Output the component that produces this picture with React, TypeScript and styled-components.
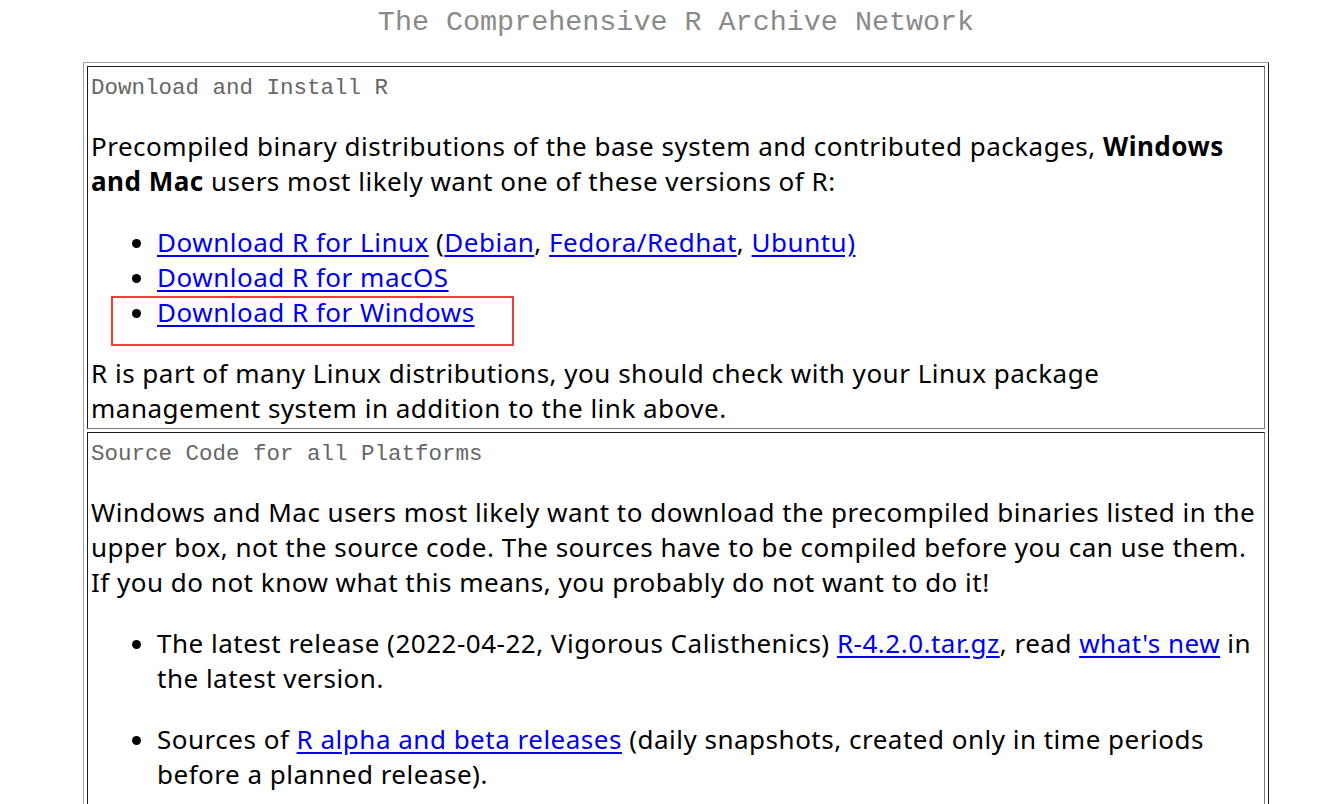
import React from 'react'
import styled, { createGlobalStyle } from 'styled-components'

const GlobalStyle = createGlobalStyle`
  html, body {
    margin: 0;
    padding: 0;
    background: #fff;
  }
  body {
    font-family: 'Noto Sans', 'Open Sans', sans-serif;
    color: #000;
  }
`

const Page = styled.div`
  width: 1186px;
  margin-left: 83px;
`

const Title = styled.h1`
  margin: 0 0 18px;
  padding-top: 2px;
  height: 42px;
  line-height: 42px;
  text-align: center;
  font-family: 'Liberation Mono', monospace;
  font-weight: normal;
  font-size: 28.4px;
  color: #8a8a8a;
`

const Frame = styled.div`
  border: 1px solid;
  border-color: #a0a0a0 #1e1e1e #1e1e1e #a0a0a0;
  padding: 3px;
  display: flex;
  flex-direction: column;
  gap: 3px;
`

const Cell = styled.section`
  position: relative;
  border: 1px solid;
  border-color: #1e1e1e #7a7a7a #7a7a7a #1e1e1e;
  padding: 6px 3px 2px;
`

const Heading = styled.h2`
  margin: 0;
  height: 30px;
  line-height: 30px;
  font-family: 'Liberation Mono', monospace;
  font-weight: normal;
  font-size: 22.5px;
  color: #666;
`

const Para = styled.p`
  margin: 26px 0;
  font-size: 26px;
  letter-spacing: 0.5px;
  line-height: 35px;
  &:last-child {
    margin-bottom: 0;
  }
`

const List = styled.ul`
  margin: 26px 0;
  padding-left: 66px;
  font-size: 26px;
  letter-spacing: 0.5px;
  line-height: 35px;
  list-style: disc;
`

const Item = styled.li<{ $spaced?: boolean }>`
  margin-bottom: ${p => (p.$spaced ? '26px' : '0')};
`

const Link = styled.a`
  color: #0000ee;
  text-decoration: underline;
  text-underline-offset: 3px;
`

const Highlight = styled.div`
  position: absolute;
  left: 23px;
  top: 229px;
  width: 399px;
  height: 46px;
  border: 2px solid #f03c3c;
  pointer-events: none;
`

export default function App() {
  return (
    <>
      <GlobalStyle />
      <Page>
        <Title>The Comprehensive R Archive Network</Title>
        <Frame>
          <Cell>
            <Highlight />
            <Heading>Download and Install R</Heading>
            <Para>
              Precompiled binary distributions of the base system and contributed packages,{' '}
              <b>Windows and Mac</b> users most likely want one of these versions of R:
            </Para>
            <List>
              <Item>
                <Link href="#">Download R for Linux</Link> (<Link href="#">Debian</Link>,{' '}
                <Link href="#">Fedora/Redhat</Link>, <Link href="#">Ubuntu)</Link>
              </Item>
              <Item>
                <Link href="#">Download R for macOS</Link>
              </Item>
              <Item>
                <Link href="#">Download R for Windows</Link>
              </Item>
            </List>
            <Para>
              R is part of many Linux distributions, you should check with your Linux package
              management system in addition to the link above.
            </Para>
          </Cell>
          <Cell>
            <Heading>Source Code for all Platforms</Heading>
            <Para>
              Windows and Mac users most likely want to download the precompiled binaries listed in
              the upper box, not the source code. The sources have to be compiled before you can use
              them. If you do not know what this means, you probably do not want to do it!
            </Para>
            <List>
              <Item $spaced>
                The latest release (2022-04-22, Vigorous Calisthenics){' '}
                <Link href="#">R-4.2.0.tar.gz</Link>, read <Link href="#">what's new</Link> in the
                latest version.
              </Item>
              <Item $spaced>
                Sources of <Link href="#">R alpha and beta releases</Link> (daily snapshots, created
                only in time periods before a planned release).
              </Item>
              <Item $spaced>
                Daily snapshots of current patched and development versions are{' '}
                <Link href="#">available here</Link>.
              </Item>
              <Item $spaced>
                Source code of older versions of R is <Link href="#">available here</Link>.
              </Item>
            </List>
          </Cell>
        </Frame>
      </Page>
    </>
  )
}
